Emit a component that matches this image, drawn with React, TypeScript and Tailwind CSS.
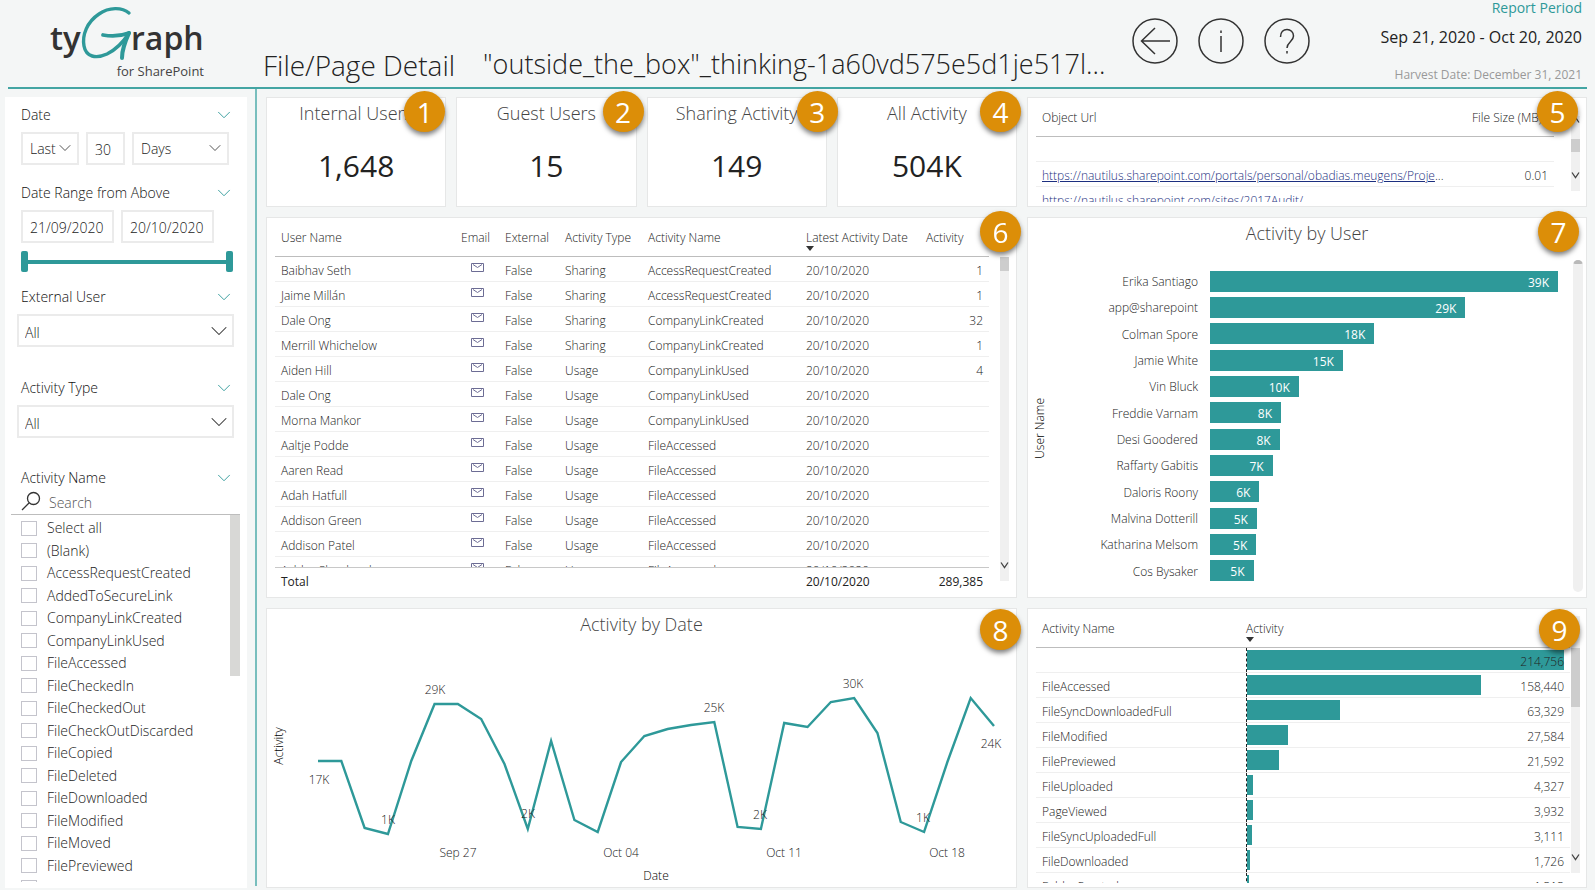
import React from 'react';
import { ChevronDown } from 'lucide-react';
import clsx from 'clsx';

const kpis = [
  { title: 'Internal Users', value: '1,648', badge: 'right-0 -top-[7px]' },
  { title: 'Guest Users', value: '15', badge: '-right-2 -top-[7px]' },
  { title: 'Sharing Activity', value: '149', badge: '-right-3 -top-[7px]' },
  { title: 'All Activity', value: '504K', badge: '-right-[5px] -top-[7px]' },
];

const activityNames = [
  'Select all',
  '(Blank)',
  'AccessRequestCreated',
  'AddedToSecureLink',
  'CompanyLinkCreated',
  'CompanyLinkUsed',
  'FileAccessed',
  'FileCheckedIn',
  'FileCheckedOut',
  'FileCheckOutDiscarded',
  'FileCopied',
  'FileDeleted',
  'FileDownloaded',
  'FileModified',
  'FileMoved',
  'FilePreviewed',
];

const userRows = [
  ['Baibhav Seth', 'Sharing', 'AccessRequestCreated', '1'],
  ['Jaime Millán', 'Sharing', 'AccessRequestCreated', '1'],
  ['Dale Ong', 'Sharing', 'CompanyLinkCreated', '32'],
  ['Merrill Whichelow', 'Sharing', 'CompanyLinkCreated', '1'],
  ['Aiden Hill', 'Usage', 'CompanyLinkUsed', '4'],
  ['Dale Ong', 'Usage', 'CompanyLinkUsed', ''],
  ['Morna Mankor', 'Usage', 'CompanyLinkUsed', ''],
  ['Aaltje Podde', 'Usage', 'FileAccessed', ''],
  ['Aaren Read', 'Usage', 'FileAccessed', ''],
  ['Adah Hatfull', 'Usage', 'FileAccessed', ''],
  ['Addison Green', 'Usage', 'FileAccessed', ''],
  ['Addison Patel', 'Usage', 'FileAccessed', ''],
  ['Ashley Shepherd', 'Usage', 'FileAccessed', ''],
];

const userBars = [
  { name: 'Erika Santiago', label: '39K', pct: 100 },
  { name: 'app@sharepoint', label: '29K', pct: 73.4 },
  { name: 'Colman Spore', label: '18K', pct: 47.2 },
  { name: 'Jamie White', label: '15K', pct: 38.2 },
  { name: 'Vin Bluck', label: '10K', pct: 25.5 },
  { name: 'Freddie Varnam', label: '8K', pct: 20.4 },
  { name: 'Desi Goodered', label: '8K', pct: 20 },
  { name: 'Raffarty Gabitis', label: '7K', pct: 18 },
  { name: 'Daloris Roony', label: '6K', pct: 14.2 },
  { name: 'Malvina Dotterill', label: '5K', pct: 13.5 },
  { name: 'Katharina Melsom', label: '5K', pct: 13.3 },
  { name: 'Cos Bysaker', label: '5K', pct: 12.5 },
];

const activityTotals: [string, number][] = [
  ['', 214756],
  ['FileAccessed', 158440],
  ['FileSyncDownloadedFull', 63329],
  ['FileModified', 27584],
  ['FilePreviewed', 21592],
  ['FileUploaded', 4327],
  ['PageViewed', 3932],
  ['FileSyncUploadedFull', 3111],
  ['FileDownloaded', 1726],
  ['FolderCreated', 1313],
];

// y position of each day in the line chart
const dailyY = [
  120, 120, 187, 193, 120, 63, 63, 78, 123, 188, 100, 179, 191, 121, 95, 88, 84, 81, 186, 188,
  82, 86, 61, 57, 92, 181, 191, 121, 57, 85,
];
const dayX = (i: number) => 51 + (i * 676) / 29;

const pointLabels: [number, number, string][] = [
  [52, 143, '17K'],
  [121, 183, '1K'],
  [168, 53, '29K'],
  [261, 177, '2K'],
  [447, 71, '25K'],
  [493, 178, '2K'],
  [586, 47, '30K'],
  [656, 181, '1K'],
  [724, 107, '24K'],
];

const dateTicks: [number, string][] = [
  [191, 'Sep 27'],
  [354, 'Oct 04'],
  [517, 'Oct 11'],
  [680, 'Oct 18'],
];

const Badge = ({ n, className }: { n: number; className: string }) => (
  <span
    className={clsx(
      'absolute z-10 flex size-[41px] items-center justify-center rounded-full bg-[#dc8e08] text-[28px] leading-none font-medium text-white shadow-[0_3px_5px_rgba(0,0,0,0.5)]',
      className,
    )}
  >
    {n}
  </span>
);

const Card = ({ children, className }: { children: React.ReactNode; className?: string }) => (
  <section className={clsx('relative min-h-0 min-w-0 border border-[#e6e7e7] bg-white', className)}>{children}</section>
);

const CardTitle = ({ children }: { children: React.ReactNode }) => (
  <h2 className="h-8 shrink-0 text-center text-lg leading-[30px] font-light text-[#444]">{children}</h2>
);

const Arrow = ({ up }: { up?: boolean }) => (
  <svg viewBox="0 0 9 8" className={clsx('h-2 w-[9px] shrink-0', up && 'rotate-180')} fill="none" stroke="#444" strokeWidth="1.3">
    <path d="M1 1.500 4.500 6.500 8 1.500" />
  </svg>
);

const ScrollBar = ({ className, thumb, up }: { className: string; thumb: string; up?: boolean }) => (
  <div aria-hidden="true" className={clsx('flex w-[9px] shrink-0 flex-col bg-[#f0f0f0]', className)}>
    {up && <Arrow up />}
    <div className={clsx('bg-[#cdcdcd]', thumb)} />
    <div className="mt-auto">
      <Arrow />
    </div>
  </div>
);

const SortMark = () => (
  <svg viewBox="0 0 8 5" className="absolute bottom-[5px] h-[5px] w-2">
    <path d="M0 0h8L4 5z" fill="#333" />
  </svg>
);

const th = 'relative h-[39px] border-b border-[#bdbdbd] px-[6px] pt-[2px] text-left font-light whitespace-nowrap';
const cell = 'h-[25px] border-b border-[#efefef] px-[6px] whitespace-nowrap';
const td = clsx(cell, 'pt-[3px]');
const tf = 'sticky bottom-0 h-[30px] border-t border-[#c8c8c8] bg-white px-[6px] pb-[2px] font-normal';
const tableCls = 'w-full table-fixed border-separate border-spacing-0 text-xs font-light text-[#222]';

const Logo = () => (
  <svg viewBox="0 0 156 76" className="h-[76px] w-[156px] shrink-0" role="img" aria-label="tyGraph for SharePoint">
    <g className="font-semibold" fill="#333">
      <text x="0" y="45" fontSize="33">ty</text>
      <text x="81" y="45" fontSize="32">raph</text>
    </g>
    <text x="154" y="71" fontSize="13" textAnchor="end" fill="#444">for SharePoint</text>
    <g fill="none" stroke="#2e9999" strokeLinecap="round" strokeLinejoin="round">
      <path d="M79 8C72 2 59 2 49 9 37 17 32 30 34 41c2 11 12 13 23 8C67 44 74 36 79 28" strokeWidth="3.4" />
      <path d="M53 30c8 1.500 18 1 26-2" strokeWidth="3.800" />
      <path d="M79 28c-4 9-7 16-7 25" strokeWidth="4" />
    </g>
  </svg>
);

const Header = () => (
  <header className="mx-2 flex h-[89px] shrink-0 border-b-2 border-[#43a5a3]">
    <div className="w-[255px] shrink-0 pt-[5px] pl-[42px]">
      <Logo />
    </div>
    <h1 className="flex min-w-0 flex-1 items-end gap-7 pb-[3px] font-light whitespace-nowrap text-[#222]">
      <span className="text-[28px] leading-[38px]">File/Page Detail</span>
      <span className="truncate text-[27px] leading-10">"outside_the_box"_thinking-1a60vd575e5d1je517l...</span>
    </h1>
    <nav className="flex shrink-0 items-start gap-5 pt-[18px]">
      <button aria-label="Back">
        <svg viewBox="0 0 46 46" className="size-[46px]" fill="none" stroke="#333" strokeWidth="1.5">
          <circle cx="23" cy="23" r="22" />
          <path d="M38 23H9.500M23 10 9.500 23 23 36" />
        </svg>
      </button>
      <button aria-label="Information">
        <svg viewBox="0 0 46 46" className="size-[46px]" fill="none" stroke="#333" strokeWidth="1.5">
          <circle cx="23" cy="23" r="22" />
          <path d="M23 18v16M23 12.500v2.500" />
        </svg>
      </button>
      <button aria-label="Help">
        <svg viewBox="0 0 46 46" className="size-[46px]" fill="none" stroke="#333" strokeWidth="1.5">
          <circle cx="23" cy="23" r="22" />
          <path d="M16.500 19c0-5 3-7.500 6.500-7.500s6.500 2.500 6.500 6.500c0 5.500-6.500 6-6.500 12M23 33v2.500" />
        </svg>
      </button>
    </nav>
    <div className="w-[277px] shrink-0 pr-[5px] text-right whitespace-nowrap">
      <p className="h-[18px] text-sm leading-4 text-[#2e9999]">Report Period</p>
      <p className="h-12 text-base leading-[38px] text-[#222]">Sep 21, 2020 - Oct 20, 2020</p>
      <p className="text-xs leading-[18px] text-[#999]">Harvest Date: December 31, 2021</p>
    </div>
  </header>
);

const SlicerTitle = ({ children, className }: { children: string; className?: string }) => (
  <div className={clsx('flex items-center justify-between pr-3 pl-4 text-sm leading-5 font-light text-[#111]', className)}>
    <h3>{children}</h3>
    <button aria-label={`Collapse ${children}`}>
      <ChevronDown size={22} strokeWidth={1} className="-my-px text-[#2e9999]" />
    </button>
  </div>
);

const field = 'h-[33px] border-2 border-[#ebebeb] bg-white text-sm font-light text-[#222]';

const SmallSelect = ({ label, value, className }: { label: string; value: string; className: string }) => (
  <div className={clsx('relative', className)}>
    <select aria-label={label} className={clsx(field, 'w-full appearance-none pl-[7px]')}>
      <option>{value}</option>
    </select>
    <ChevronDown size={20} strokeWidth={1} className="pointer-events-none absolute top-[6px] right-1 text-[#333]" />
  </div>
);

const AllSelect = ({ label }: { label: string }) => (
  <div className="relative mr-[13px] ml-3">
    <select aria-label={label} className={clsx(field, 'w-full appearance-none pt-1 pl-[6px]')}>
      <option>All</option>
    </select>
    <ChevronDown size={28} strokeWidth={0.9} className="pointer-events-none absolute top-[3px] right-px text-[#333]" />
  </div>
);

const rangeCls =
  'pointer-events-none absolute inset-0 h-full w-full appearance-none bg-transparent [&::-webkit-slider-thumb]:pointer-events-auto [&::-webkit-slider-thumb]:h-[21px] [&::-webkit-slider-thumb]:w-[7px] [&::-webkit-slider-thumb]:appearance-none [&::-webkit-slider-thumb]:rounded-xs [&::-webkit-slider-thumb]:bg-[#2e9999]';

const Sidebar = () => (
  <aside className="mt-2 mb-[2px] ml-[5px] flex w-[242px] shrink-0 flex-col bg-white pt-2">
    <SlicerTitle>Date</SlicerTitle>
    <div className="mt-[7px] flex gap-[7px] pr-[18px] pl-4">
      <SmallSelect label="Period" value="Last" className="w-[58px]" />
      <input aria-label="Number of days" defaultValue="30" className={clsx(field, 'w-[39px] pt-[2px] pl-[7px]')} />
      <SmallSelect label="Unit" value="Days" className="flex-1" />
    </div>

    <SlicerTitle className="mt-[18px]">Date Range from Above</SlicerTitle>
    <div className="mt-[7px] flex gap-[7px] px-4">
      <input aria-label="From" defaultValue="21/09/2020" className={clsx(field, 'w-[93px] pt-px pl-[7px]')} />
      <input aria-label="To" defaultValue="20/10/2020" className={clsx(field, 'w-[93px] pt-px pl-[7px]')} />
    </div>
    <div className="relative mt-2 mr-[14px] ml-4 flex h-[21px] items-center">
      <div className="h-1 w-full bg-[#2e9999]" />
      <input type="range" aria-label="Range start" min="0" max="30" defaultValue="0" className={rangeCls} />
      <input type="range" aria-label="Range end" min="0" max="30" defaultValue="30" className={rangeCls} />
    </div>

    <SlicerTitle className="mt-[15px]">External User</SlicerTitle>
    <div className="mt-[7px]">
      <AllSelect label="External User" />
    </div>

    <SlicerTitle className="mt-[31px]">Activity Type</SlicerTitle>
    <div className="mt-[7px]">
      <AllSelect label="Activity Type" />
    </div>

    <SlicerTitle className="mt-[30px]">Activity Name</SlicerTitle>
    <div className="mr-[7px] ml-[6px] flex h-[27px] items-center gap-2 border-b border-[#bdbdbd] pl-[10px]">
      <svg viewBox="0 0 20 20" className="size-5" fill="none" stroke="#333" strokeWidth="1.3">
        <circle cx="12.500" cy="7.500" r="6" />
        <path d="M8 12 1 19" />
      </svg>
      <input
        aria-label="Search activity names"
        placeholder="Search"
        className="w-40 pt-1 text-sm font-light placeholder:text-[#555]"
      />
    </div>
    <div className="mr-[7px] flex min-h-0 flex-1 pb-[6px] pl-4">
      <ul className="flex flex-1 flex-col overflow-hidden pt-[2px] text-sm leading-5 font-light text-[#222]">
        {activityNames.map((name) => (
          <li key={name} className="flex min-h-0 flex-1 items-center">
            <label className="flex items-center gap-[10px]">
              <input type="checkbox" className="h-[15px] w-4 appearance-none border border-[#c4c4cc] checked:bg-[#2e9999]" />
              {name}
            </label>
          </li>
        ))}
        <li className="h-[5px] shrink-0 overflow-hidden pt-[3px]">
          <input type="checkbox" aria-label="FileRecycled" className="block h-[15px] w-4 appearance-none border border-[#c4c4cc]" />
        </li>
      </ul>
      <div aria-hidden="true" className="h-[161px] w-[10px] bg-[#d8d8d6]" />
    </div>
  </aside>
);

const ObjectCard = () => (
  <Card className="flex gap-[17px] pr-[6px] pb-1 pl-2">
    <div className="min-w-0 flex-1 overflow-hidden">
      <table className={tableCls}>
        <colgroup>
          <col />
          <col className="w-[88px]" />
        </colgroup>
        <thead>
          <tr>
            <th className={th}>Object Url</th>
            <th className={th}>File Size (MB)</th>
          </tr>
        </thead>
        <tbody>
          <tr>
            <td className={td}></td>
            <td className={td}></td>
          </tr>
          <tr>
            <td className={td}>
              <a href="#project" className="text-[#1c2f80] underline">
                https://nautilus.sharepoint.com/portals/personal/obadias.meugens/Proje
              </a>
              ...
            </td>
            <td className={clsx(td, 'text-right')}>0.01</td>
          </tr>
          <tr>
            <td className={td}>
              <a href="#audit" className="text-[#1c2f80] underline">https://nautilus.sharepoint.com/sites/2017Audit/</a>
            </td>
            <td className={td}></td>
          </tr>
        </tbody>
      </table>
    </div>
    <ScrollBar className="mt-[18px] mb-[11px] pb-3" thumb="mt-[15px] h-[13px]" up />
    <Badge n={5} className="-top-[7px] right-[8px]" />
  </Card>
);

const Envelope = () => (
  <svg viewBox="0 0 13 9" className="mx-auto mb-1 h-[9px] w-[13px]" fill="none" stroke="#6c6c94">
    <path d="M.5.5h12v8H.5zM2 1.500 6.500 4.500 11 1.500" />
  </svg>
);

const UsersCard = () => (
  <Card className="flex gap-[11px] pr-[7px] pl-2">
    <div className="min-w-0 flex-1 overflow-hidden">
      <table className={tableCls}>
        <colgroup>
          <col />
          <col className="w-[44px]" />
          <col className="w-[60px]" />
          <col className="w-[83px]" />
          <col className="w-[158px]" />
          <col className="w-[120px]" />
          <col className="w-[69px]" />
        </colgroup>
        <thead>
          <tr>
            <th className={th}>User Name</th>
            <th className={th}>Email</th>
            <th className={th}>External</th>
            <th className={th}>Activity Type</th>
            <th className={th}>Activity Name</th>
            <th className={th} aria-sort="descending">
              Latest Activity Date
              <SortMark />
            </th>
            <th className={th}>Activity</th>
          </tr>
        </thead>
        <tbody>
          {userRows.map(([name, type, activity, count], i) => (
            <tr key={i}>
              <td className={td}>{name}</td>
              <td className={cell}>
                <a href="#mail" aria-label={`Email ${name}`}>
                  <Envelope />
                </a>
              </td>
              <td className={td}>False</td>
              <td className={td}>{type}</td>
              <td className={td}>{activity}</td>
              <td className={td}>20/10/2020</td>
              <td className={clsx(td, 'text-right')}>{count}</td>
            </tr>
          ))}
        </tbody>
        <tfoot>
          <tr>
            <td className={tf} colSpan={5}>Total</td>
            <td className={tf}>20/10/2020</td>
            <td className={clsx(tf, 'text-right')}>289,385</td>
          </tr>
        </tfoot>
      </table>
    </div>
    <ScrollBar className="mt-[39px] mb-4 pb-3" thumb="h-[14px]" />
    <Badge n={6} className="-top-[7px] -right-[5px]" />
  </Card>
);

const UserChartCard = () => (
  <Card className="flex flex-col">
    <CardTitle>Activity by User</CardTitle>
    <div className="flex min-h-0 flex-1 pr-[3px] text-xs font-light text-[#222]">
      <div className="flex w-6 items-center justify-center pt-[10px]">
        <span className="rotate-180 text-black [writing-mode:vertical-rl]">User Name</span>
      </div>
      <ul className="flex flex-1 flex-col pt-[18px] pb-[13px]">
        {userBars.map((bar) => (
          <li key={bar.name} className="flex min-h-0 flex-1 items-center gap-3">
            <span className="w-[146px] shrink-0 pt-[2px] text-right whitespace-nowrap">{bar.name}</span>
            <div className="mr-[15px] flex-1">
              <div className="h-[21px] bg-[#2e9999] pt-1 pr-[9px] text-right font-normal text-white" style={{ width: `${bar.pct}%` }}>
                {bar.label}
              </div>
            </div>
          </li>
        ))}
      </ul>
      <div aria-hidden="true" className="mt-[10px] mb-[5px] w-[10px] overflow-hidden rounded-full bg-[#f0f0f0]">
        <div className="h-1 rounded-full bg-[#b9b9b9]" />
      </div>
    </div>
    <Badge n={7} className="-top-[7px] right-[7px]" />
  </Card>
);

const DateChartCard = () => (
  <Card className="flex flex-col">
    <CardTitle>Activity by Date</CardTitle>
    <svg viewBox="0 0 749 246" className="min-h-0 w-full flex-1 text-xs font-light" fill="#222" textAnchor="middle" role="img" aria-label="Activity by Date">
      <polyline
        points={dailyY.map((y, i) => `${dayX(i)},${y}`).join(' ')}
        fill="none"
        stroke="#2e9999"
        strokeWidth="2.400"
      />
      {pointLabels.map(([x, y, label]) => (
        <text key={x} x={x} y={y}>{label}</text>
      ))}
      {dateTicks.map(([x, label]) => (
        <text key={x} x={x} y="216">{label}</text>
      ))}
      <text x="389" y="239" fill="#000">Date</text>
      <text transform="translate(16 105) rotate(-90)" fill="#000">Activity</text>
    </svg>
    <Badge n={8} className="-right-[5px] top-0" />
  </Card>
);

const ActivityCard = () => (
  <Card className="flex gap-px pr-[6px] pb-1 pl-2">
    <div className="min-w-0 flex-1 overflow-hidden">
      <table className={tableCls}>
        <colgroup>
          <col className="w-[204px]" />
          <col />
        </colgroup>
        <thead>
          <tr>
            <th className={th}>Activity Name</th>
            <th className={th} aria-sort="descending">
              Activity
              <SortMark />
            </th>
          </tr>
        </thead>
        <tbody>
          {activityTotals.map(([name, total]) => (
            <tr key={name}>
              <td className={td}>{name}</td>
              <td className={cell}>
                <div className="relative flex h-6 items-center justify-end border-l border-dashed border-[#222]">
                  <div className="absolute left-0 h-5 bg-[#2e9999]" style={{ width: `${(total / 214756) * 100}%` }} />
                  <span className="relative pt-[3px]">{total.toLocaleString('en-US')}</span>
                </div>
              </td>
            </tr>
          ))}
        </tbody>
      </table>
    </div>
    <ScrollBar className="mt-[7px] mb-[10px] pb-3" thumb="mt-[32px] h-[59px]" />
    <Badge n={9} className="top-0 right-[6px]" />
  </Card>
);

const App: React.FC = () => {
  return (
    <div className="flex h-screen flex-col bg-[#f4f6f6] font-['Open_Sans','Noto_Sans',sans-serif]">
      <Header />
      <div className="flex min-h-0 flex-1">
        <Sidebar />
        <div className="mb-1 ml-2 w-[2px] shrink-0 bg-[#78bebd]" />
        <main className="mt-2 mr-2 mb-[2px] ml-[9px] grid min-w-0 flex-1 grid-cols-[minmax(0,751fr)_minmax(0,560fr)] grid-rows-[minmax(0,110fr)_minmax(0,381fr)_minmax(0,280fr)] gap-[10px]">
          <div className="grid min-h-0 grid-cols-4 gap-[10px]">
            {kpis.map((kpi, i) => (
              <Card key={kpi.title} className="text-center">
                <CardTitle>{kpi.title}</CardTitle>
                <p className="mt-4 text-[30px] leading-10 text-[#222]">{kpi.value}</p>
                <Badge n={i + 1} className={kpi.badge} />
              </Card>
            ))}
          </div>
          <ObjectCard />
          <UsersCard />
          <UserChartCard />
          <DateChartCard />
          <ActivityCard />
        </main>
      </div>
    </div>
  );
};

export default App;
